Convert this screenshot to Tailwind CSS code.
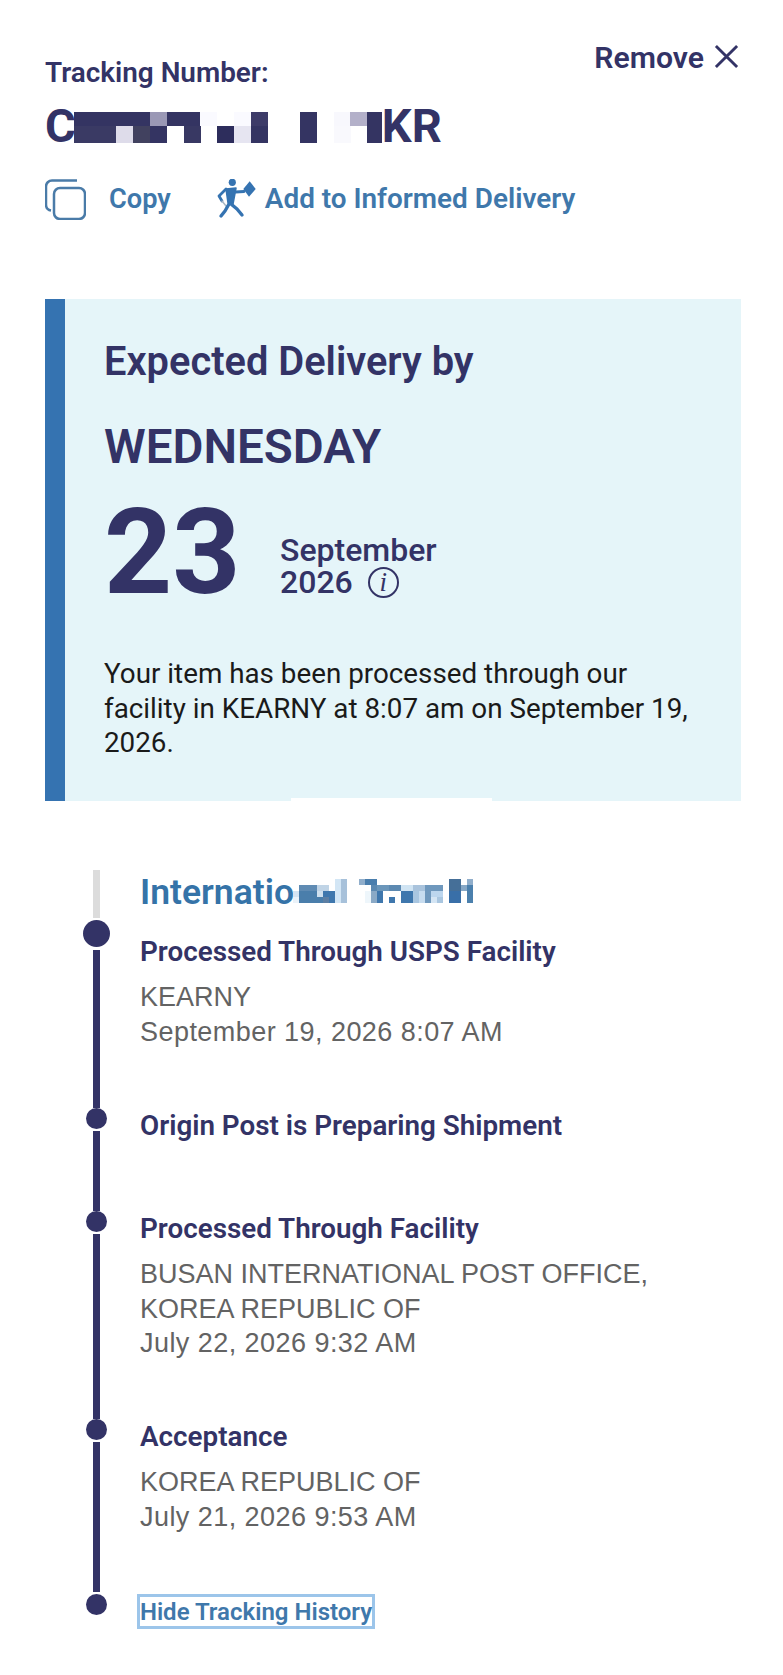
<!DOCTYPE html>
<html lang="en">
<head>
  <meta charset="UTF-8">
  <title>Tracking</title>
  <script src="https://cdn.jsdelivr.net/npm/@tailwindcss/browser@4"></script>
</head>
<body class="bg-white font-['Roboto',sans-serif]">
  <div class="w-[783px] h-[1675px] overflow-hidden relative">

    <!-- header -->
    <div class="pl-[45px] pr-[44px] pt-[58px] h-[299px] relative">
      <button class="absolute right-[44px] top-[40px] flex items-center gap-[10px] text-[#333366] text-[30.2px] font-semibold leading-[36px]">
        Remove
        <svg class="w-[25px] h-[25px] -mt-[3px]" viewBox="0 0 26 26" fill="none" stroke="#333366" stroke-width="3"><path d="M2 2l22 22M24 2L2 24"/></svg>
      </button>
      <p class="text-[#333366] text-[27.9px] font-semibold leading-[30px]">Tracking Number:</p>
      <div class="flex items-center h-[44px] mt-[16px] text-[#333366] text-[47px] font-bold leading-[44px]">
        <span>C</span>
        <svg class="w-[308px] h-[34px] -ml-[2px]" viewBox="0 0 308 34" shape-rendering="crispEdges">
          <rect x="0" y="3" width="126" height="14" fill="#343462"/>
          <rect x="76" y="3" width="17" height="14" fill="#9a98b5"/>
          <rect x="126" y="3" width="17" height="14" fill="#fafaff"/>
          <rect x="160" y="3" width="17" height="14" fill="#fafaff"/>
          <rect x="177" y="3" width="17" height="14" fill="#3d3b68"/>
          <rect x="226" y="3" width="17" height="14" fill="#343462"/>
          <rect x="260" y="3" width="17" height="14" fill="#f8f8fd"/>
          <rect x="276" y="3" width="17" height="14" fill="#b3b0c9"/>
          <rect x="293" y="3" width="15" height="14" fill="#343462"/>
          <rect x="0" y="17" width="42" height="17" fill="#3a3a64"/>
          <rect x="42" y="17" width="17" height="17" fill="#dedcea"/>
          <rect x="59" y="17" width="17" height="17" fill="#41415f"/>
          <rect x="76" y="17" width="17" height="17" fill="#343462"/>
          <rect x="110" y="17" width="17" height="17" fill="#383863"/>
          <rect x="143" y="17" width="17" height="17" fill="#2d2d5c"/>
          <rect x="160" y="17" width="17" height="17" fill="#e6e5f1"/>
          <rect x="177" y="17" width="17" height="17" fill="#343462"/>
          <rect x="226" y="17" width="17" height="17" fill="#343462"/>
          <rect x="260" y="17" width="17" height="17" fill="#f9f9fd"/>
          <rect x="293" y="17" width="15" height="17" fill="#343462"/>
        </svg>
        <span>KR</span>
      </div>
      <div class="flex items-center h-[40px] mt-[31px] text-[#3f78ab] font-semibold">
        <svg class="w-[41px] h-[41px] shrink-0" viewBox="0 0 41 41" fill="none" stroke="#4a7ba8" stroke-width="2.5">
          <path d="M32 1.5H7a6 6 0 0 0-6 6V26a6 6 0 0 0 5 5.5"/>
          <rect x="9" y="9" width="31" height="31" rx="6"/>
        </svg>
        <span class="ml-[23px] text-[27.2px]">Copy</span>
        <svg class="w-[42px] h-[40px] ml-[45px] shrink-0" viewBox="7 5 42 40" fill="none" stroke="#3573b1" stroke-linecap="round" stroke-linejoin="round">
          <circle cx="23.3" cy="8.3" r="3.6" fill="#3573b1" stroke="none"/>
          <path d="M17 15l10-1-3 16-5-1z" fill="#3573b1" stroke-width="1.5"/>
          <path d="M17 15l-7 7 3 5" stroke-width="2.8"/>
          <path d="M13 27l4 5" stroke="#a9b8c6" stroke-width="1.5"/>
          <path d="M26.5 18l8.5-.5" stroke-width="2.8"/>
          <path d="M20 30l-4 7-4 5M22 30l6 5 5 6" stroke-width="3.4"/>
          <path d="M40.7 7.3l6 7.7-6.7 7.7-5.7-7.7z" fill="#3573b1" stroke="none"/>
        </svg>
        <span class="ml-[7px] text-[27.9px]">Add to Informed Delivery</span>
      </div>
    </div>

    <!-- expected delivery -->
    <div class="ml-[45px] w-[696px] h-[502px] flex bg-[#e5f5f9] relative">
      <div class="w-[20px] shrink-0 bg-[#3573b1]"></div>
      <div class="pl-[39px] text-[#333366]">
        <p class="mt-[41px] text-[39.8px] font-semibold leading-[44px]">Expected Delivery by</p>
        <p class="mt-[38px] text-[47.5px] font-semibold leading-[50px]">WEDNESDAY</p>
        <div class="flex items-end mt-[26px] h-[110px]">
          <span class="text-[119px] font-bold leading-[110px] w-[176px]">23</span>
          <div class="text-[32px] font-medium leading-[33px] mb-[9px]">
            <p>September</p>
            <p class="flex items-center gap-[15px] -mt-[1px]">2026
              <span class="w-[31px] h-[31px] rounded-full border-[2.5px] border-[#333366] flex items-center justify-center font-['Liberation_Serif',serif] italic text-[27px] font-normal">i</span>
            </p>
          </div>
        </div>
        <p class="mt-[49px] text-[27.8px] leading-[34.6px] text-[#1a1a1a] whitespace-nowrap">Your item has been processed through our<br>facility in KEARNY at 8:07 am on September 19,<br>2026.</p>
      </div>
      <div class="absolute left-[246px] bottom-0 w-[201px] h-[3px] bg-white"></div>
    </div>

    <!-- timeline -->
    <div class="pt-[69px] pl-[83px]">
      <div class="flex h-[50px]">
        <div class="w-[27px] flex justify-center shrink-0"><div class="w-[7px] h-[48px] bg-[#dcdcdc]"></div></div>
        <div class="ml-[30px] flex items-center h-[40px] text-[#3573a8] text-[35.5px] font-semibold leading-[40px] mt-[2px]">
          <span class="w-[153px] whitespace-nowrap">Internatio</span>
          <svg class="w-[180px] h-[24px] -mt-[3px] shrink-0 bg-white relative" viewBox="0 0 30 4" shape-rendering="crispEdges">
            <rect x="7" y="0" width="1" height="4" fill="#d3e6f5"/>
            <rect x="8" y="0" width="1" height="4" fill="#a7c1da"/>
            <rect x="11" y="0" width="1" height="1" fill="#90aecb"/>
            <rect x="12" y="0" width="2" height="1" fill="#4a7ead"/>
            <rect x="26" y="0" width="2" height="2" fill="#456f98"/>
            <rect x="29" y="0" width="1" height="1" fill="#90aecb"/>
            <rect x="1" y="1" width="3" height="1" fill="#5f8bb3"/>
            <rect x="4" y="1" width="2" height="1" fill="#c0d4e6"/>
            <rect x="13" y="1" width="1" height="1" fill="#5c89b1"/>
            <rect x="14" y="1" width="2" height="1" fill="#6b96ba"/>
            <rect x="16" y="1" width="2" height="1" fill="#5c89b1"/>
            <rect x="18" y="1" width="2" height="1" fill="#d0e4f3"/>
            <rect x="20" y="1" width="2" height="1" fill="#a9c3dc"/>
            <rect x="22" y="1" width="3" height="1" fill="#6f98bd"/>
            <rect x="28" y="1" width="1" height="1" fill="#87a8c6"/>
            <rect x="29" y="1" width="1" height="3" fill="#4b80ad"/>
            <rect x="0" y="2" width="1" height="1" fill="#d4e4f2"/>
            <rect x="1" y="2" width="3" height="2" fill="#4a7eab"/>
            <rect x="4" y="2" width="1" height="1" fill="#cfe0ee"/>
            <rect x="5" y="2" width="2" height="1" fill="#3f77ad"/>
            <rect x="12" y="2" width="1" height="2" fill="#eef6fb"/>
            <rect x="13" y="2" width="1" height="2" fill="#8aa9c6"/>
            <rect x="14" y="2" width="1" height="2" fill="#3f77ad"/>
            <rect x="18" y="2" width="2" height="2" fill="#3f77ad"/>
            <rect x="20" y="2" width="1" height="2" fill="#a9c6e0"/>
            <rect x="21" y="2" width="1" height="2" fill="#c7dcef"/>
            <rect x="22" y="2" width="1" height="2" fill="#6f98bd"/>
            <rect x="23" y="2" width="2" height="1" fill="#bcd6ee"/>
            <rect x="26" y="2" width="2" height="2" fill="#396fa8"/>
            <rect x="0" y="3" width="1" height="1" fill="#eaf2f9"/>
            <rect x="4" y="3" width="1" height="1" fill="#4a7eab"/>
            <rect x="5" y="3" width="1" height="1" fill="#5d7fa3"/>
            <rect x="6" y="3" width="1" height="1" fill="#3f77ad"/>
            <rect x="16" y="3" width="1" height="1" fill="#3f77ad"/>
            <rect x="23" y="3" width="1" height="1" fill="#d4e5f4"/>
            <rect x="24" y="3" width="1" height="1" fill="#a9c6e0"/>
          </svg>
        </div>
      </div>

      <div class="flex h-[188px]">
        <div class="w-[27px] flex flex-col items-center shrink-0">
          <div class="w-[27px] h-[27px] rounded-full bg-[#333366] shrink-0"></div>
          <div class="w-[7px] flex-1 mt-[3px] bg-[#333366]"></div>
        </div>
        <div class="ml-[30px] pt-[15px]">
          <p class="text-[#333366] text-[27.8px] font-semibold leading-[34px]">Processed Through USPS Facility</p>
          <div class="mt-[11px] font-['Liberation_Sans',sans-serif] text-[27px] leading-[34.6px] text-[#636363]">
            <p>KEARNY</p>
            <p class="tracking-[0.45px]">September 19, 2026 8:07 AM</p>
          </div>
        </div>
      </div>

      <div class="flex h-[103px]">
        <div class="w-[27px] flex flex-col items-center shrink-0">
          <div class="w-[21px] h-[21px] rounded-full bg-[#333366] shrink-0"></div>
          <div class="w-[7px] flex-1 mt-[2px] bg-[#333366]"></div>
        </div>
        <div class="ml-[30px] pt-[1px]">
          <p class="text-[#333366] text-[27.8px] font-semibold leading-[34px]">Origin Post is Preparing Shipment</p>
        </div>
      </div>

      <div class="flex h-[208px]">
        <div class="w-[27px] flex flex-col items-center shrink-0">
          <div class="w-[21px] h-[21px] rounded-full bg-[#333366] shrink-0"></div>
          <div class="w-[7px] flex-1 mt-[2px] bg-[#333366]"></div>
        </div>
        <div class="ml-[30px] pt-[1px]">
          <p class="text-[#333366] text-[27.8px] font-semibold leading-[34px]">Processed Through Facility</p>
          <div class="mt-[11px] font-['Liberation_Sans',sans-serif] text-[27px] leading-[34.6px] text-[#636363]">
            <p>BUSAN INTERNATIONAL POST OFFICE,</p>
            <p>KOREA REPUBLIC OF</p>
            <p class="tracking-[0.45px]">July 22, 2026 9:32 AM</p>
          </div>
        </div>
      </div>

      <div class="flex h-[175px]">
        <div class="w-[27px] flex flex-col items-center shrink-0">
          <div class="w-[21px] h-[21px] rounded-full bg-[#333366] shrink-0"></div>
          <div class="w-[7px] flex-1 mt-[2px] mb-[2px] bg-[#333366]"></div>
        </div>
        <div class="ml-[30px] pt-[1px]">
          <p class="text-[#333366] text-[27.8px] font-semibold leading-[34px]">Acceptance</p>
          <div class="mt-[11px] font-['Liberation_Sans',sans-serif] text-[27px] leading-[34.6px] text-[#636363]">
            <p>KOREA REPUBLIC OF</p>
            <p class="tracking-[0.45px]">July 21, 2026 9:53 AM</p>
          </div>
        </div>
      </div>

      <div class="flex">
        <div class="w-[27px] flex flex-col items-center shrink-0">
          <div class="w-[21px] h-[21px] rounded-full bg-[#333366] shrink-0"></div>
        </div>
        <a class="ml-[27px] h-[35px] w-[238px] border-[3px] border-[#9cc5ea] flex items-center justify-center text-[#3f78ab] text-[24px] font-semibold whitespace-nowrap">Hide Tracking History</a>
      </div>
    </div>
  </div>
</body>
</html>
